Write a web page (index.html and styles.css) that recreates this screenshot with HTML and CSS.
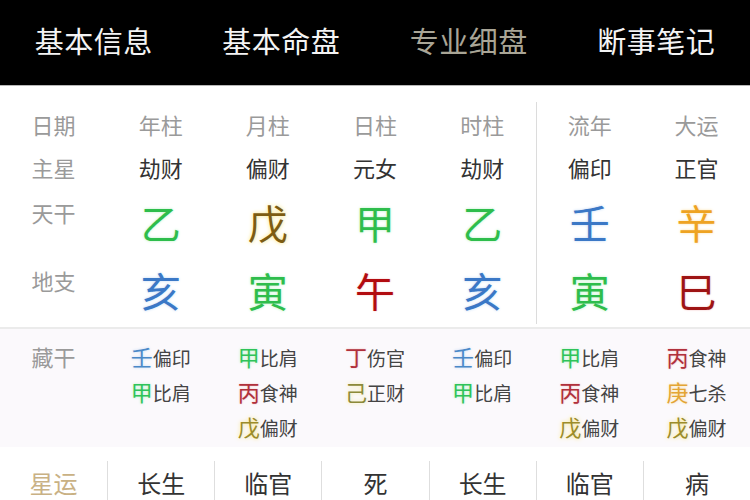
FILE: index.html
```html
<!DOCTYPE html>
<html lang="zh">
<head>
<meta charset="utf-8">
<link rel="stylesheet" href="styles.css">
</head>
<body>
<nav class="nav">
  <div class="tab">基本信息</div>
  <div class="tab">基本命盘</div>
  <div class="tab active">专业细盘</div>
  <div class="tab">断事笔记</div>
</nav>

<section class="chart">
  <div class="cell head label">日期</div>
  <div class="cell head label">年柱</div>
  <div class="cell head label">月柱</div>
  <div class="cell head label">日柱</div>
  <div class="cell head label">时柱</div>
  <div class="cell head label split">流年</div>
  <div class="cell head label">大运</div>

  <div class="cell star label">主星</div>
  <div class="cell star">劫财</div>
  <div class="cell star">偏财</div>
  <div class="cell star">元女</div>
  <div class="cell star">劫财</div>
  <div class="cell star split">偏印</div>
  <div class="cell star">正官</div>

  <div class="cell big rowlabel"><span class="label">天干</span></div>
  <div class="cell big"><span class="g wood">乙</span></div>
  <div class="cell big"><span class="g earth">戊</span></div>
  <div class="cell big"><span class="g wood">甲</span></div>
  <div class="cell big"><span class="g wood">乙</span></div>
  <div class="cell big split"><span class="g water">壬</span></div>
  <div class="cell big"><span class="g metal">辛</span></div>

  <div class="cell big rowlabel"><span class="label">地支</span></div>
  <div class="cell big"><span class="g water">亥</span></div>
  <div class="cell big"><span class="g wood">寅</span></div>
  <div class="cell big"><span class="g fire">午</span></div>
  <div class="cell big"><span class="g water">亥</span></div>
  <div class="cell big split"><span class="g wood">寅</span></div>
  <div class="cell big"><span class="g fire2">巳</span></div>
</section>

<section class="hidden">
  <div class="hcol"><span class="label">藏干</span></div>
  <div class="hcol">
    <div class="hs"><span class="s water">壬</span>偏印</div>
    <div class="hs"><span class="s wood">甲</span>比肩</div>
  </div>
  <div class="hcol">
    <div class="hs"><span class="s wood">甲</span>比肩</div>
    <div class="hs"><span class="s fire">丙</span>食神</div>
    <div class="hs"><span class="s earth">戊</span>偏财</div>
  </div>
  <div class="hcol">
    <div class="hs"><span class="s fire">丁</span>伤官</div>
    <div class="hs"><span class="s earth2">己</span>正财</div>
  </div>
  <div class="hcol">
    <div class="hs"><span class="s water">壬</span>偏印</div>
    <div class="hs"><span class="s wood">甲</span>比肩</div>
  </div>
  <div class="hcol">
    <div class="hs"><span class="s wood">甲</span>比肩</div>
    <div class="hs"><span class="s fire">丙</span>食神</div>
    <div class="hs"><span class="s earth">戊</span>偏财</div>
  </div>
  <div class="hcol">
    <div class="hs"><span class="s fire">丙</span>食神</div>
    <div class="hs"><span class="s metal">庚</span>七杀</div>
    <div class="hs"><span class="s earth">戊</span>偏财</div>
  </div>
</section>

<section class="luck">
  <div class="lc tan">星运</div>
  <div class="lc">长生</div>
  <div class="lc">临官</div>
  <div class="lc">死</div>
  <div class="lc">长生</div>
  <div class="lc">临官</div>
  <div class="lc">病</div>
</section>
</body>
</html>
```

FILE: styles.css
```css
* { box-sizing: border-box; }

html, body {
  margin: 0;
  padding: 0;
  background: #ffffff;
  font-family: "Noto Sans CJK SC", "Noto Sans", sans-serif;
  overflow: hidden;
}

.nav {
  height: 86px;
  background: #000000;
  border-bottom: 1px solid #b8b8b8;
  display: grid;
  grid-template-columns: repeat(4, 1fr);
  align-items: center;
  padding-bottom: 6px;
}

.tab {
  text-align: center;
  color: #f4f4f4;
  font-size: 29px;
  letter-spacing: 0.5px;
}

.tab.active {
  color: #a9a596;
}

.chart {
  display: grid;
  grid-template-columns: repeat(7, 1fr);
  grid-template-rows: 44px 42px 68px 68px;
  padding-top: 16px;
  padding-bottom: 3px;
}

.cell {
  display: flex;
  align-items: center;
  justify-content: center;
  font-size: 22px;
  color: #333333;
}

.label {
  color: #9a9a9a;
  font-size: 22px;
}

.split {
  border-left: 1px solid #dcdcdc;
}

.rowlabel {
  align-items: flex-start;
  padding-top: 8px;
}

.big .g {
  font-size: 40px;
  line-height: 1;
}

.wood  { color: #2ebd4c; text-shadow: 0 0 3px #b8f0c4; }
.water { color: #3b78c6; text-shadow: 0 0 3px #c0d8f4; }
.earth { color: #7d5c12; text-shadow: 0 0 4px #f7e27a; }
.metal { color: #eea322; text-shadow: 0 0 3px #fbe0a8; }
.fire  { color: #b20c10; text-shadow: 0 0 2px #f0b8b8; }
.fire2 { color: #9e1414; text-shadow: 0 0 2px #f0b8b8; }
.earth2 { color: #8c8a3a; text-shadow: 0 0 4px #f2e79a; }

.hidden {
  display: grid;
  grid-template-columns: repeat(7, 1fr);
  background: #fbf9fc;
  border-top: 2px solid #ebebeb;
  padding: 10px 0 6px;
  height: 120px;
}

.hcol {
  display: flex;
  flex-direction: column;
  align-items: center;
}

.hcol .label {
  line-height: 35px;
}

.hs {
  height: 35px;
  line-height: 35px;
  font-size: 19px;
  color: #444444;
  white-space: nowrap;
}

.hs .s {
  font-size: 22px;
}

.hidden .water { color: #4a88c8; }
.hidden .wood  { color: #2fc35a; }
.hidden .fire  { color: #b0303c; }
.hidden .earth { color: #9c8c2a; }
.hidden .metal { color: #e3a535; }

.luck {
  display: grid;
  grid-template-columns: repeat(7, 1fr);
  margin-top: 14px;
  height: 60px;
}

.lc {
  text-align: center;
  font-size: 24px;
  color: #333333;
  line-height: 44px;
  border-left: 1px solid #dedede;
}

.lc:first-child {
  border-left: none;
}

.lc.tan {
  color: #c9b184;
}
```
